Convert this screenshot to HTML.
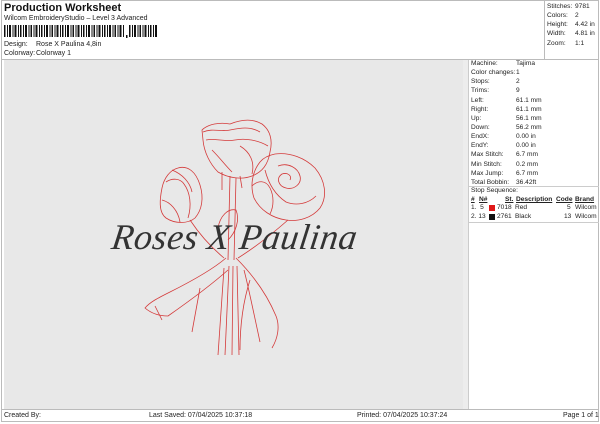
<!DOCTYPE html>
<html><head><meta charset="utf-8"><style>
*{margin:0;padding:0;box-sizing:border-box}
body{width:600px;height:424px;background:#fff;font-family:"Liberation Sans",sans-serif;font-size:7px;color:#222;position:relative;overflow:hidden}
.a{position:absolute;white-space:nowrap}
.frame{position:absolute;border:1px solid #bbb}
.rp{font-size:6.6px}
.rp div{height:9.15px;line-height:9px}
.rp span{display:inline-block;width:45px}
.t{font-size:6.6px}
</style></head><body>
<div class="frame" style="left:1px;top:0;width:598px;height:422px"></div>
<div class="a" style="left:4px;top:2px;font-size:11px;font-weight:bold;color:#111">Production Worksheet</div>
<div class="a" style="left:4px;top:15px">Wilcom EmbroideryStudio – Level 3 Advanced</div>
<svg class="a" style="left:4px;top:25px" width="155" height="13">
<g fill="#111">
<rect x="0" y="0" width="1.5" height="12"/><rect x="3" y="0" width="1" height="12"/><rect x="5" y="0" width="2" height="12"/><rect x="8.5" y="0" width="1" height="12"/><rect x="10.5" y="0" width="2" height="12"/><rect x="14" y="0" width="1" height="12"/><rect x="16" y="0" width="1.5" height="12"/><rect x="19" y="0" width="1" height="12"/><rect x="21" y="0" width="2" height="12"/><rect x="24.5" y="0" width="1" height="12"/><rect x="26.5" y="0" width="1.5" height="12"/><rect x="29.5" y="0" width="1" height="12"/><rect x="31.5" y="0" width="2" height="12"/><rect x="35" y="0" width="1" height="12"/><rect x="37" y="0" width="1.5" height="12"/><rect x="40" y="0" width="1" height="12"/><rect x="42" y="0" width="2" height="12"/><rect x="45.5" y="0" width="1" height="12"/><rect x="47.5" y="0" width="1.5" height="12"/><rect x="50.5" y="0" width="1" height="12"/><rect x="52.5" y="0" width="2" height="12"/><rect x="56" y="0" width="1" height="12"/><rect x="58" y="0" width="1.5" height="12"/><rect x="61" y="0" width="1" height="12"/><rect x="63" y="0" width="2" height="12"/><rect x="66.5" y="0" width="1" height="12"/><rect x="68.5" y="0" width="1.5" height="12"/><rect x="71.5" y="0" width="1" height="12"/><rect x="73.5" y="0" width="2" height="12"/><rect x="77" y="0" width="1" height="12"/><rect x="79" y="0" width="1.5" height="12"/><rect x="82" y="0" width="1" height="12"/><rect x="84" y="0" width="2" height="12"/><rect x="87.5" y="0" width="1" height="12"/><rect x="89.5" y="0" width="1.5" height="12"/><rect x="92.5" y="0" width="1" height="12"/><rect x="94.5" y="0" width="2" height="12"/><rect x="98" y="0" width="1" height="12"/><rect x="100" y="0" width="1.5" height="12"/><rect x="103" y="0" width="1" height="12"/><rect x="105" y="0" width="2" height="12"/><rect x="108.5" y="0" width="1" height="12"/><rect x="110.5" y="0" width="1.5" height="12"/><rect x="113.5" y="0" width="1" height="12"/><rect x="115.5" y="0" width="2" height="12"/><rect x="119" y="0" width="1" height="12"/>
<rect x="122" y="10" width="1.5" height="3"/>
<rect x="125" y="0" width="1.5" height="12"/><rect x="128" y="0" width="1" height="12"/><rect x="130" y="0" width="2" height="12"/><rect x="133.5" y="0" width="1" height="12"/><rect x="135.5" y="0" width="1.5" height="12"/><rect x="138.5" y="0" width="1" height="12"/><rect x="140.5" y="0" width="2" height="12"/><rect x="144" y="0" width="1" height="12"/><rect x="146" y="0" width="1.5" height="12"/><rect x="149" y="0" width="1" height="12"/><rect x="151" y="0" width="2" height="12"/>
</g></svg>
<div class="a" style="left:4px;top:41px">Design:</div><div class="a" style="left:36px;top:41px">Rose X Paulina 4,8in</div>
<div class="a" style="left:4px;top:50px">Colorway:</div><div class="a" style="left:36px;top:50px">Colorway 1</div>
<div class="a" style="left:544px;top:0;width:1px;height:59px;background:#bbb"></div>
<div class="a rp" style="left:547px;top:2px">
<div><span style="width:28px">Stitches:</span>9781</div><div><span style="width:28px">Colors:</span>2</div><div><span style="width:28px">Height:</span>4.42 in</div><div><span style="width:28px">Width:</span>4.81 in</div><div><span style="width:28px">Zoom:</span>1:1</div></div>
<div class="a" style="left:1px;top:59px;width:598px;height:1px;background:#bbb"></div>
<div class="a" style="left:4px;top:60px;width:459px;height:349px;background:#e8e8e8"></div>
<div class="a" style="left:463px;top:60px;width:5px;height:349px;background:#ededed"></div>
<div class="a" style="left:468px;top:60px;width:1px;height:349px;background:#ccc"></div>
<div class="a rp" style="left:471px;top:59px">
<div><span>Machine:</span>Tajima</div><div><span>Color changes:</span>1</div><div><span>Stops:</span>2</div><div><span>Trims:</span>9</div><div><span>Left:</span>61.1 mm</div><div><span>Right:</span>61.1 mm</div><div><span>Up:</span>56.1 mm</div><div><span>Down:</span>56.2 mm</div><div><span>EndX:</span>0.00 in</div><div><span>EndY:</span>0.00 in</div><div><span>Max Stitch:</span>6.7 mm</div><div><span>Min Stitch:</span>0.2 mm</div><div><span>Max Jump:</span>6.7 mm</div><div><span>Total Bobbin:</span>36.42ft</div></div>
<div class="a" style="left:469px;top:186px;width:130px;height:1px;background:#ccc"></div>
<div class="a t" style="left:471px;top:187px">Stop Sequence:</div>
<div class="a t" style="left:471px;top:196px;font-weight:bold;text-decoration:underline">#</div>
<div class="a t" style="left:479px;top:196px;font-weight:bold;text-decoration:underline">N#</div>
<div class="a t" style="left:505px;top:196px;font-weight:bold;text-decoration:underline">St.</div>
<div class="a t" style="left:516px;top:196px;font-weight:bold;text-decoration:underline">Description</div>
<div class="a t" style="left:556px;top:196px;font-weight:bold;text-decoration:underline">Code</div>
<div class="a t" style="left:575px;top:196px;font-weight:bold;text-decoration:underline">Brand</div>
<div class="a t" style="left:471px;top:204px">1.&nbsp;&nbsp;5</div><div class="a" style="left:489px;top:205px;width:6px;height:6px;background:#e01818"></div><div class="a t" style="left:497px;top:204px">7018</div><div class="a t" style="left:515px;top:204px">Red</div><div class="a t" style="left:567px;top:204px">5</div><div class="a t" style="left:575px;top:204px">Wilcom</div>
<div class="a t" style="left:471px;top:213px">2.&nbsp;13</div><div class="a" style="left:489px;top:214px;width:6px;height:6px;background:#111"></div><div class="a t" style="left:497px;top:213px">2761</div><div class="a t" style="left:515px;top:213px">Black</div><div class="a t" style="left:564px;top:213px">13</div><div class="a t" style="left:575px;top:213px">Wilcom</div>
<div class="a" style="left:469px;top:222px;width:130px;height:1px;background:#ccc"></div>
<svg class="a" style="left:100px;top:110px" width="270" height="250" viewBox="0 0 270 250" fill="none" stroke="#d43a3a" stroke-width="0.8">
<!-- top rose -->
<path d="M102 20 C108 14 120 12 130 14 C140 10 152 8 162 14 C170 20 173 30 170 42 C168 55 162 62 152 66 C142 70 128 68 118 62 C110 54 104 42 103 30 Z"/>
<path d="M103 22 C112 18 122 22 130 20 C140 18 150 16 160 22 M106 30 C115 28 125 32 135 30 C145 28 158 30 168 36 M112 40 C120 48 125 55 132 62 M140 36 C150 42 155 52 152 64"/>
<path d="M122 62 L122 80 M140 66 L142 78"/>
<!-- left rose -->
<path d="M78 58 C88 55 96 62 100 75 C104 88 102 100 95 108 C88 114 75 114 66 108 C58 102 60 88 62 78 C64 68 70 60 78 58 Z"/>
<path d="M66 72 C72 68 80 68 84 74 C90 82 92 95 88 108 M62 90 C70 92 78 100 80 112 M72 60 C82 64 90 72 92 82"/>
<!-- right rose -->
<path d="M175 44 C190 42 205 48 215 58 C225 70 228 86 220 98 C212 108 198 112 186 110 C172 108 160 100 154 88 C150 76 152 62 160 52 C164 47 170 45 175 44 Z"/>
<path d="M178 56 C188 52 198 58 200 66 C202 74 194 80 186 78 C178 76 176 68 182 64 C188 62 192 66 190 70 M165 60 C168 72 174 84 186 92 C196 96 208 94 216 86 M152 76 C158 70 166 70 170 78 C174 86 174 96 170 104"/>
<!-- stems -->
<path d="M130 66 L128 150 M136 68 L134 150 M90 110 C100 125 112 138 124 148 M188 110 C172 124 154 138 138 148"/>
<path d="M118 118 C120 106 128 98 136 100 C140 110 136 122 128 130"/>
<!-- bow -->
<path d="M126 148 C112 160 90 172 70 182 C58 188 50 192 45 198 C52 204 60 206 68 206 C88 192 110 176 128 160"/>
<path d="M55 196 L62 210 M100 178 L92 222"/>
<path d="M136 148 C150 162 166 182 176 206 C180 216 178 228 172 238 M144 160 C148 175 152 195 160 232 M150 170 C142 195 140 220 140 240"/>
<path d="M124 158 L118 245 M129 156 L125 245 M133 156 L132 245 M137 156 L139 245"/>
</svg>
<div class="a" style="left:112px;top:216px;font-family:'Liberation Serif',serif;font-style:italic;font-size:36px;color:#333;letter-spacing:0.5px;transform:skewX(-8deg)">Roses X Paulina</div>
<div class="a" style="left:1px;top:409px;width:598px;height:1px;background:#bbb"></div>
<div class="a" style="left:4px;top:412px">Created By:</div>
<div class="a" style="left:149px;top:412px">Last Saved: 07/04/2025 10:37:18</div>
<div class="a" style="left:357px;top:412px">Printed: 07/04/2025 10:37:24</div>
<div class="a" style="left:563px;top:412px">Page 1 of 1</div>
</body></html>
